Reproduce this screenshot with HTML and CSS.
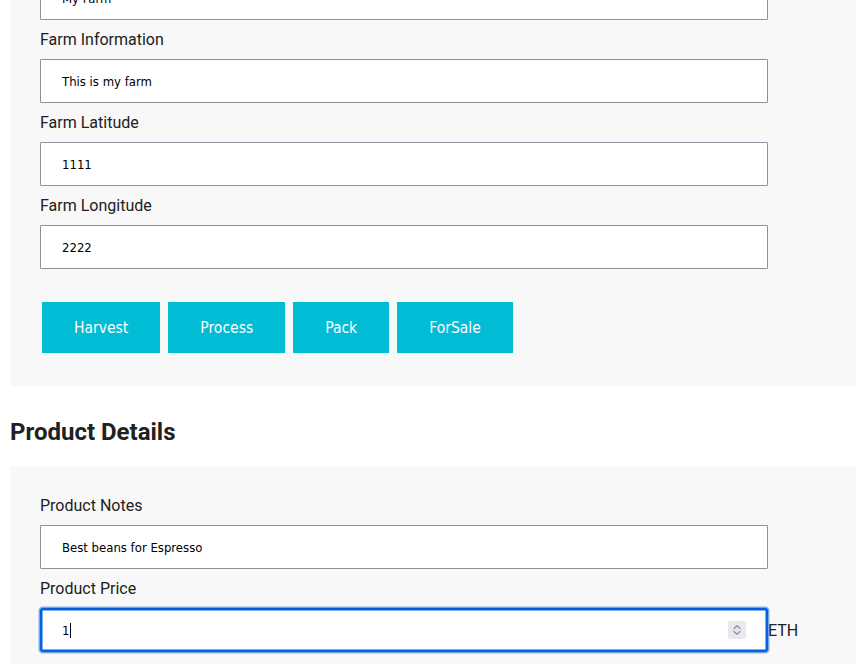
FILE: index.html
```html
<!DOCTYPE html>
<html lang="en">
<head>
<meta charset="utf-8">
<title>Farm &amp; Product Details</title>
<link rel="stylesheet" href="styles.css">
</head>
<body>
<main class="page">
  <section class="panel">
    <div class="field">
      <label class="label" for="farmName">Farm Name</label>
      <input class="input" id="farmName" type="text" value="My Farm">
    </div>
    <div class="field">
      <label class="label" for="farmInfo">Farm Information</label>
      <input class="input" id="farmInfo" type="text" value="This is my farm">
    </div>
    <div class="field">
      <label class="label" for="farmLat">Farm Latitude</label>
      <input class="input" id="farmLat" type="text" value="1111">
    </div>
    <div class="field">
      <label class="label" for="farmLong">Farm Longitude</label>
      <input class="input" id="farmLong" type="text" value="2222">
    </div>
    <div class="actions">
      <button class="btn" type="button">Harvest</button>
      <button class="btn" type="button">Process</button>
      <button class="btn" type="button">Pack</button>
      <button class="btn" type="button">ForSale</button>
    </div>
  </section>

  <h2 class="section-title">Product Details</h2>

  <section class="panel">
    <div class="field">
      <label class="label" for="productNotes">Product Notes</label>
      <input class="input" id="productNotes" type="text" value="Best beans for Espresso">
    </div>
    <div class="field">
      <label class="label" for="productPrice">Product Price</label>
      <div class="price-row">
        <div class="input-wrap">
          <input class="input input-focused" id="productPrice" type="text" value="1">
          <span class="caret"></span>
          <span class="spinner">
            <svg width="18" height="18" viewBox="0 0 18 18" aria-hidden="true">
              <rect x="0" y="0" width="18" height="18" rx="2" fill="#e9e9ed"/>
              <path d="M6 7.5 L9 4.8 L12 7.5" fill="none" stroke="#8f8f9d" stroke-width="1.3" stroke-linecap="round" stroke-linejoin="round"/>
              <path d="M6 10.5 L9 13.2 L12 10.5" fill="none" stroke="#8f8f9d" stroke-width="1.3" stroke-linecap="round" stroke-linejoin="round"/>
            </svg>
          </span>
        </div>
        <span class="unit">ETH</span>
      </div>
    </div>
  </section>
</main>
</body>
</html>
```

FILE: styles.css
```css
html, body {
  margin: 0;
  padding: 0;
  overflow: hidden;
  background: #ffffff;
}

body {
  font-family: Roboto, "Liberation Sans", sans-serif;
  color: #212121;
}

.page {
  margin-top: -83px;
  padding-left: 10px;
  margin-right: -40px;
}

.panel {
  background: #f8f8f8;
  border-radius: 4px;
  padding: 20px 30px 33px 30px;
}

.field {
  display: flex;
  flex-direction: column;
}

.label {
  display: block;
  font-size: 16px;
  line-height: 19px;
  margin: 10px 0 10px 0;
  color: #212121;
}

.input {
  box-sizing: border-box;
  width: 728px;
  height: 44px;
  margin: 0;
  padding: 0 21px;
  border: 1px solid #8f8f9d;
  border-radius: 1px;
  background: #ffffff;
  color: #000000;
  font-family: "DejaVu Sans Condensed", "DejaVu Sans", sans-serif;
  font-size: 13px;
  outline: none;
}

.actions {
  display: flex;
  gap: 8px;
  margin-top: 33px;
  padding-left: 2px;
}

.btn {
  height: 51px;
  padding: 0 32px;
  border: none;
  border-radius: 0;
  background: #00bcd4;
  color: #ffffff;
  font-family: "DejaVu Sans Condensed", "DejaVu Sans", sans-serif;
  font-size: 15.5px;
  cursor: pointer;
}

.section-title {
  font-family: Roboto, "Liberation Sans", sans-serif;
  font-weight: 700;
  font-size: 24px;
  line-height: 28px;
  margin: 32px 0 20px 0;
  color: #212121;
}

.price-row {
  display: flex;
  align-items: center;
}

.input-wrap {
  position: relative;
  width: 728px;
  height: 44px;
}

.input-focused {
  border: 2px solid #0060df;
  border-radius: 3px;
  padding-left: 20px;
  box-shadow: 0 0 0 1px rgba(0, 96, 223, 0.4), 0 0 0 2px rgba(0, 96, 223, 0.22), inset 0 0 0 0.5px #0060df;
}

.caret {
  position: absolute;
  left: 30px;
  top: 15px;
  width: 1px;
  height: 15px;
  background: #000000;
}

.spinner {
  position: absolute;
  right: 22px;
  top: 13px;
  width: 18px;
  height: 18px;
  display: block;
}

.spinner svg {
  display: block;
}

.unit {
  font-size: 16px;
  line-height: 19px;
  color: #212121;
}
```
